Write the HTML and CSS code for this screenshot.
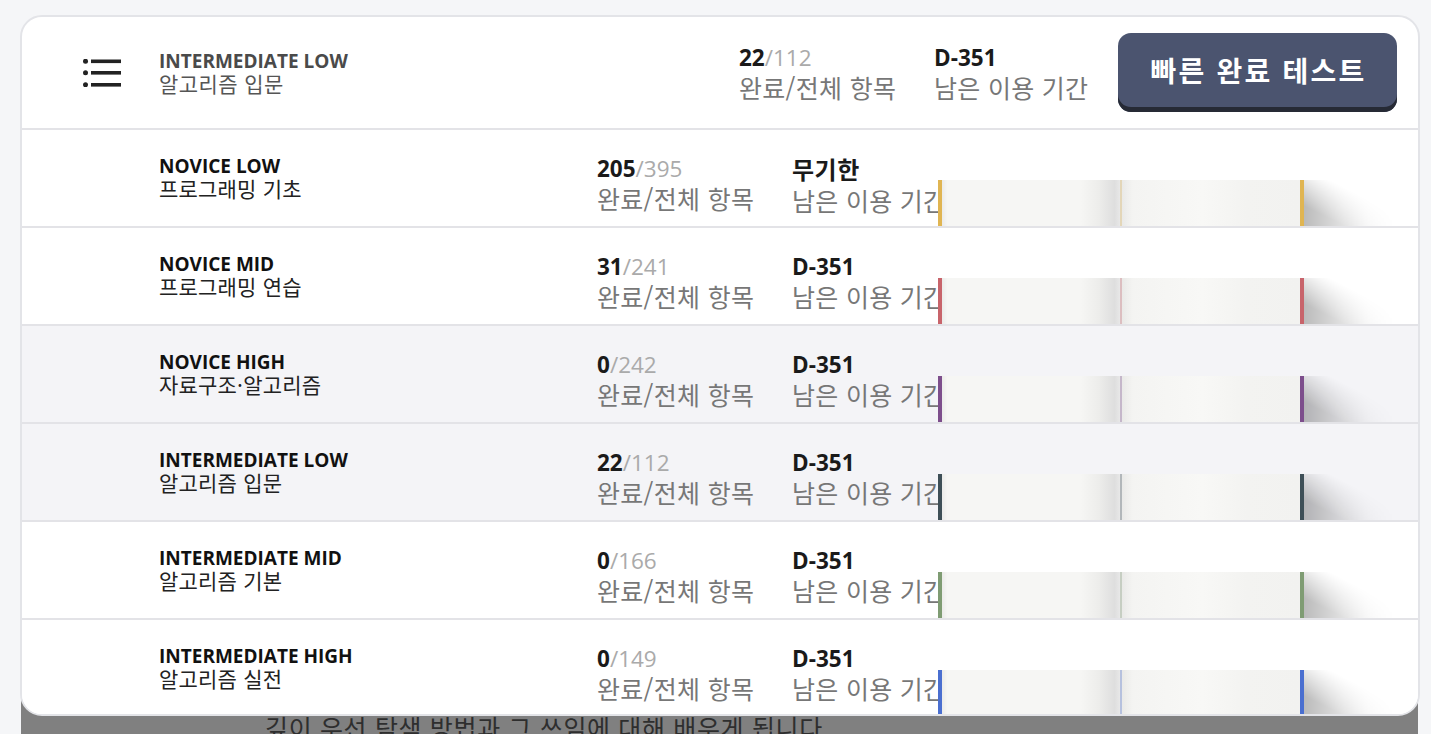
FILE: index.html
```html
<!DOCTYPE html>
<html lang="ko">
<head>
<meta charset="utf-8">
<title>코스 목록</title>
<link rel="stylesheet" href="styles.css">
</head>
<body>
<div class="page">
  <div class="card">
    <div class="header">
      <svg class="menu-icon" width="38" height="28" viewBox="0 0 38 28" aria-hidden="true">
        <circle cx="2.5" cy="2.3" r="2.5"/>
        <circle cx="2.5" cy="13.8" r="2.5"/>
        <circle cx="2.5" cy="25.8" r="2.5"/>
        <rect x="8" y="0.5" width="30" height="3.6"/>
        <rect x="8" y="12" width="30" height="3.6"/>
        <rect x="8" y="24" width="30" height="3.6"/>
      </svg>
      <div class="head-title">
        <div class="level">INTERMEDIATE LOW</div>
        <div class="course">알고리즘 입문</div>
      </div>
      <div class="stat stat-progress">
        <div class="num"><b>22</b><span class="total">/112</span></div>
        <div class="label">완료/전체 항목</div>
      </div>
      <div class="stat stat-period">
        <div class="num"><b>D-351</b></div>
        <div class="label">남은 이용 기간</div>
      </div>
      <button class="quick-btn">빠른 완료 테스트</button>
    </div>

    <div class="row c-yellow">
      <div class="row-title">
        <div class="level">NOVICE LOW</div>
        <div class="course">프로그래밍 기초</div>
      </div>
      <div class="stat stat-progress">
        <div class="num"><b>205</b><span class="total">/395</span></div>
        <div class="label">완료/전체 항목</div>
      </div>
      <div class="stat">
        <div class="num"><b class="num-ko">무기한</b></div>
        <div class="label">남은 이용 기간</div>
      </div>
      <div class="book"><i class="edge"></i><i class="page-l"></i><i class="mid"></i><i class="page-r"></i><i class="edge"></i><i class="shadow"></i></div>
    </div>

    <div class="row c-red">
      <div class="row-title">
        <div class="level">NOVICE MID</div>
        <div class="course">프로그래밍 연습</div>
      </div>
      <div class="stat stat-progress">
        <div class="num"><b>31</b><span class="total">/241</span></div>
        <div class="label">완료/전체 항목</div>
      </div>
      <div class="stat">
        <div class="num"><b>D-351</b></div>
        <div class="label">남은 이용 기간</div>
      </div>
      <div class="book"><i class="edge"></i><i class="page-l"></i><i class="mid"></i><i class="page-r"></i><i class="edge"></i><i class="shadow"></i></div>
    </div>

    <div class="row row-shaded c-purple">
      <div class="row-title">
        <div class="level">NOVICE HIGH</div>
        <div class="course">자료구조·알고리즘</div>
      </div>
      <div class="stat stat-progress">
        <div class="num"><b>0</b><span class="total">/242</span></div>
        <div class="label">완료/전체 항목</div>
      </div>
      <div class="stat">
        <div class="num"><b>D-351</b></div>
        <div class="label">남은 이용 기간</div>
      </div>
      <div class="book"><i class="edge"></i><i class="page-l"></i><i class="mid"></i><i class="page-r"></i><i class="edge"></i><i class="shadow"></i></div>
    </div>

    <div class="row row-shaded c-slate">
      <div class="row-title">
        <div class="level">INTERMEDIATE LOW</div>
        <div class="course">알고리즘 입문</div>
      </div>
      <div class="stat stat-progress">
        <div class="num"><b>22</b><span class="total">/112</span></div>
        <div class="label">완료/전체 항목</div>
      </div>
      <div class="stat">
        <div class="num"><b>D-351</b></div>
        <div class="label">남은 이용 기간</div>
      </div>
      <div class="book"><i class="edge"></i><i class="page-l"></i><i class="mid"></i><i class="page-r"></i><i class="edge"></i><i class="shadow"></i></div>
    </div>

    <div class="row c-green">
      <div class="row-title">
        <div class="level">INTERMEDIATE MID</div>
        <div class="course">알고리즘 기본</div>
      </div>
      <div class="stat stat-progress">
        <div class="num"><b>0</b><span class="total">/166</span></div>
        <div class="label">완료/전체 항목</div>
      </div>
      <div class="stat">
        <div class="num"><b>D-351</b></div>
        <div class="label">남은 이용 기간</div>
      </div>
      <div class="book"><i class="edge"></i><i class="page-l"></i><i class="mid"></i><i class="page-r"></i><i class="edge"></i><i class="shadow"></i></div>
    </div>

    <div class="row c-blue">
      <div class="row-title">
        <div class="level">INTERMEDIATE HIGH</div>
        <div class="course">알고리즘 실전</div>
      </div>
      <div class="stat stat-progress">
        <div class="num"><b>0</b><span class="total">/149</span></div>
        <div class="label">완료/전체 항목</div>
      </div>
      <div class="stat">
        <div class="num"><b>D-351</b></div>
        <div class="label">남은 이용 기간</div>
      </div>
      <div class="book"><i class="edge"></i><i class="page-l"></i><i class="mid"></i><i class="page-r"></i><i class="edge"></i><i class="shadow"></i></div>
    </div>
  </div>
  <div class="backdrop">
    <p class="backdrop-text">깊이 우선 탐색 방법과 그 쓰임에 대해 배우게 됩니다</p>
  </div>
</div>
</body>
</html>
```

FILE: styles.css
```css
* { box-sizing: border-box; }

html, body {
  margin: 0;
  height: 734px;
  overflow: hidden;
  background: #f5f6f8;
  font-family: "Open Sans", "Noto Sans CJK KR", sans-serif;
}

.page {
  padding: 15px 0 0 20px;
}

.card {
  position: relative;
  z-index: 1;
  width: 1400px;
  height: 701px;
  background: #fff;
  border: 2px solid #e3e4e8;
  border-radius: 22px;
  overflow: hidden;
}

/* header */
.header {
  display: flex;
  align-items: center;
  height: 113px;
  padding: 0 21px 0 61px;
  border-bottom: 2px solid #e3e3e7;
}

.menu-icon {
  flex: none;
  fill: #222;
  margin-right: 38px;
}

.head-title {
  flex: 1;
}

.head-title .level {
  font-size: 19px;
  font-weight: 700;
  line-height: 22px;
  color: #4a4a4a;
}

.head-title .course {
  font-family: "Noto Sans CJK KR", sans-serif;
  font-size: 21px;
  letter-spacing: 0.4px;
  line-height: 23px;
  color: #555;
}

.header .stat {
  padding-top: 3px;
}

.header .stat-progress { width: 195px; }
.header .stat-period { width: 184px; }

.quick-btn {
  flex: none;
  width: 279px;
  height: 79px;
  border: 0;
  border-radius: 13px;
  background: #4b546f;
  box-shadow: inset 0 -5px 0 #262a35;
  color: #fff;
  font-family: "Noto Sans CJK KR", sans-serif;
  font-size: 28px;
  font-weight: 700;
  letter-spacing: 2.2px;
  padding: 0 0 5px 2px;
}

/* rows */
.row {
  position: relative;
  display: flex;
  align-items: flex-start;
  height: 98px;
  padding-left: 137px;
  border-bottom: 2px solid #e3e3e7;
  background: #fff;
}

.row-shaded { background: #f4f4f7; }

.row-title {
  width: 438px;
  padding-top: 25px;
}

.row-title .level {
  font-size: 19px;
  font-weight: 700;
  line-height: 22px;
  color: #111;
}

.row-title .course {
  font-family: "Noto Sans CJK KR", sans-serif;
  font-size: 21px;
  letter-spacing: 0.2px;
  line-height: 23px;
  color: #222;
}

.stat {
  padding-top: 25px;
}

.row .stat-progress { width: 195px; }

.num {
  font-size: 22.5px;
  line-height: 27px;
  color: #1a1a1a;
  white-space: nowrap;
}

.num b { font-weight: 700; }

.num .num-ko {
  font-family: "Noto Sans CJK KR", sans-serif;
  font-size: 24px;
  letter-spacing: 0.5px;
}

.num .total {
  color: #aaa;
  font-weight: 400;
}

.label {
  font-family: "Noto Sans CJK KR", sans-serif;
  font-size: 25px;
  letter-spacing: 0.3px;
  line-height: 33px;
  color: #777;
  white-space: nowrap;
}

/* book illustration */
.c-yellow { --c: #e0b552; }
.c-red { --c: #c8646b; }
.c-purple { --c: #7d4e8c; }
.c-slate { --c: #3e4f57; }
.c-green { --c: #7f9c73; }
.c-blue { --c: #4a6fd0; }

.book {
  position: absolute;
  left: 916px;
  bottom: 0;
  height: 46px;
  display: flex;
}

.book i { display: block; height: 100%; }

.book .edge {
  width: 4px;
  background: var(--c);
}

.book .page-l {
  width: 178px;
  background: linear-gradient(to right, #ebebe9 0, #f6f6f4 3%, #f6f6f4 78%, #ededeb 88%, #dedede 97%, #e8e8e8 100%);
}

.book .mid {
  width: 2px;
  background: color-mix(in srgb, var(--c) 30%, #e4e4e4);
}

.book .page-r {
  width: 178px;
  background: linear-gradient(to right, #e9e9e7 0, #f4f4f2 6%, #f8f8f6 45%, #f3f3f1 70%, #f2f2f0 100%);
}

.book .shadow {
  width: 92px;
  background: linear-gradient(to right, rgba(0,0,0,0.27) 0, rgba(0,0,0,0.14) 35%, rgba(0,0,0,0.04) 70%, rgba(0,0,0,0) 100%);
  -webkit-mask-image: linear-gradient(to top right, #000 22%, rgba(0,0,0,0) 64%);
  mask-image: linear-gradient(to top right, #000 22%, rgba(0,0,0,0) 64%);
}

/* dimmed content behind */
.backdrop {
  width: 1397px;
  margin: -24px 0 0 1px;
  padding: 19px 0 0 244px;
  height: 60px;
  background: #808080;
}

.backdrop-text {
  margin: 0;
  font-family: "Noto Sans CJK KR", sans-serif;
  font-size: 25px;
  letter-spacing: 0.65px;
  line-height: 32px;
  color: #2e2e2e;
  white-space: nowrap;
}
```
